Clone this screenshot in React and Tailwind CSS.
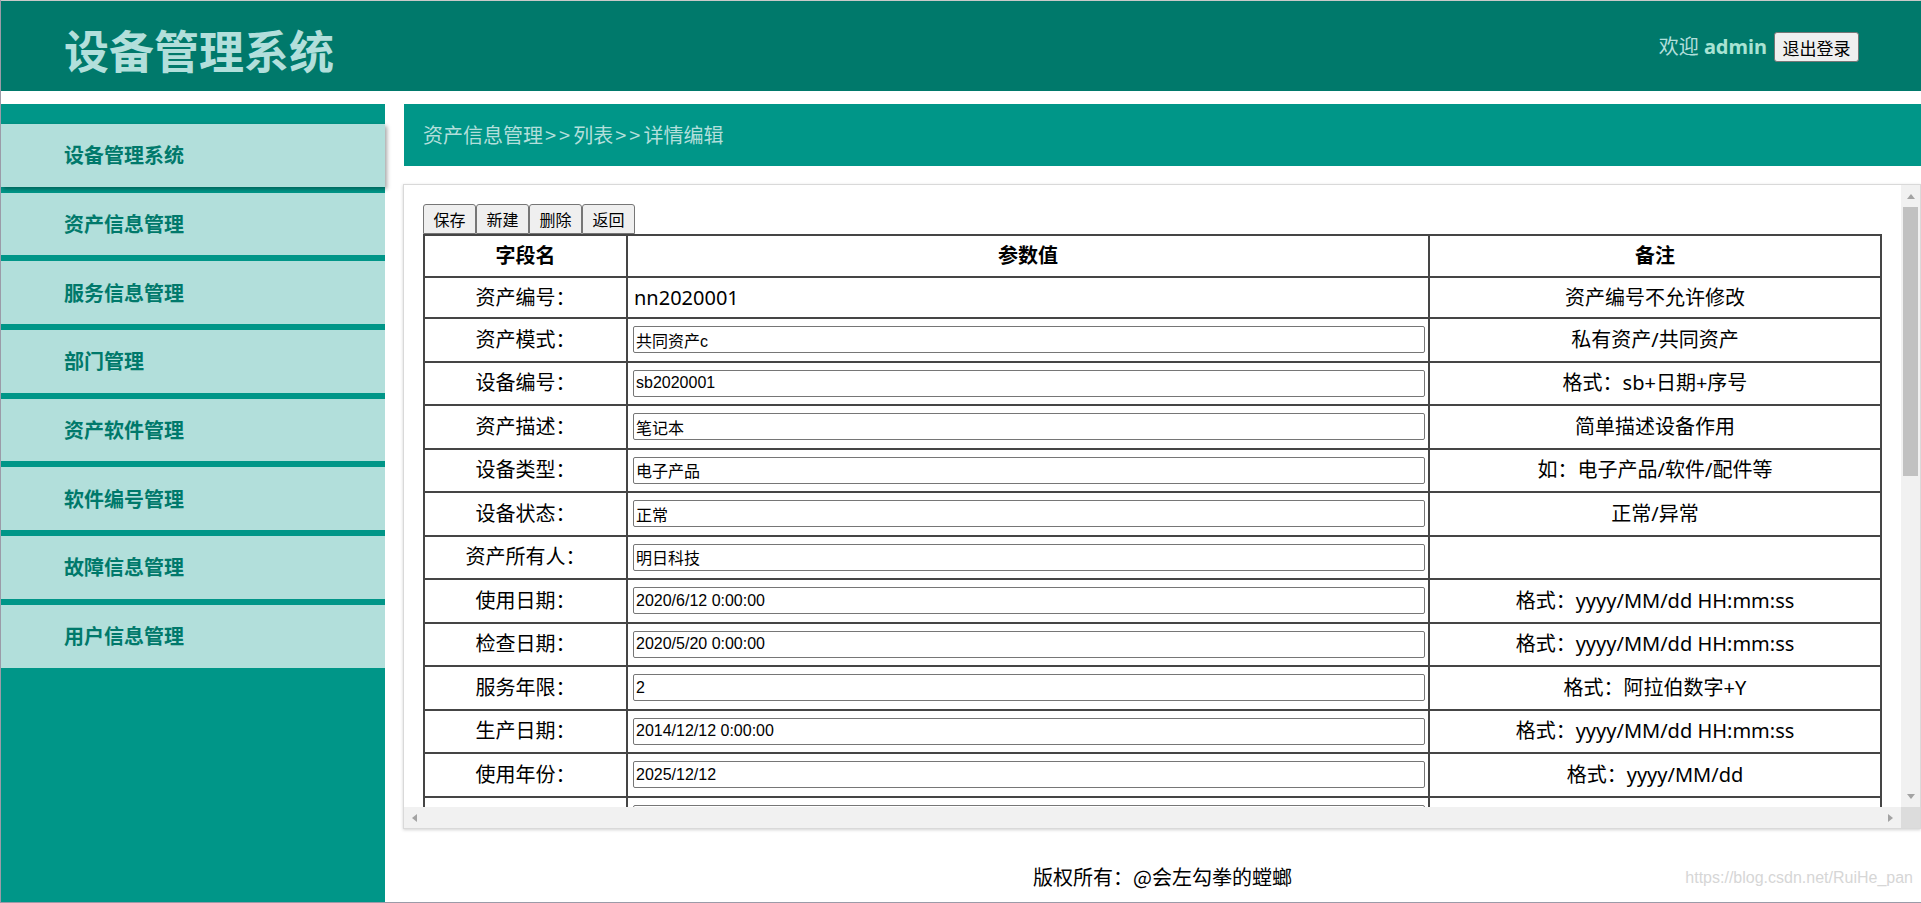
import React from "react";

const menu = [
  "设备管理系统",
  "资产信息管理",
  "服务信息管理",
  "部门管理",
  "资产软件管理",
  "软件编号管理",
  "故障信息管理",
  "用户信息管理",
];

const rows = [
  ["资产模式：", "共同资产c", "私有资产/共同资产"],
  ["设备编号：", "sb2020001", "格式：sb+日期+序号"],
  ["资产描述：", "笔记本", "简单描述设备作用"],
  ["设备类型：", "电子产品", "如：电子产品/软件/配件等"],
  ["设备状态：", "正常", "正常/异常"],
  ["资产所有人：", "明日科技", ""],
  ["使用日期：", "2020/6/12 0:00:00", "格式：yyyy/MM/dd HH:mm:ss"],
  ["检查日期：", "2020/5/20 0:00:00", "格式：yyyy/MM/dd HH:mm:ss"],
  ["服务年限：", "2", "格式：阿拉伯数字+Y"],
  ["生产日期：", "2014/12/12 0:00:00", "格式：yyyy/MM/dd HH:mm:ss"],
  ["使用年份：", "2025/12/12", "格式：yyyy/MM/dd"],
  ["", "", ""],
];

function Tri({ dir }) {
  const pts = {
    up: "0,5 4,0 8,5",
    down: "0,0 8,0 4,5",
    left: "5,0 5,8 0,4",
    right: "0,0 0,8 5,4",
  }[dir];
  const v = dir === "up" || dir === "down";
  return (
    <svg width={v ? 8 : 5} height={v ? 5 : 8} viewBox={v ? "0 0 8 5" : "0 0 5 8"}>
      <polygon points={pts} fill="#a3a3a3" />
    </svg>
  );
}

export default function App() {
  return (
    <div className="relative w-[1921px] h-[903px] overflow-hidden flex flex-col bg-white border-l border-b border-[#9b9ba8] font-['Noto_Sans','Noto_Sans_CJK_SC',sans-serif] text-black">
      <header className="h-[91px] shrink-0 bg-[#00796b] border-t border-[#c9c9c9] flex items-center justify-between pl-[63px] pr-[62px]">
        <h1 className="pt-[6px] text-[45px] font-bold leading-none text-[#b2dfdb] font-['Noto_Sans_CJK_SC',sans-serif]">
          设备管理系统
        </h1>
        <div className="flex items-center gap-[7px] pt-[2px]">
          <span className="text-[20px] leading-none text-[#b2dfdb]">
            欢迎 <b className="text-[#a8e3d3]">admin</b>
          </span>
          <button className="h-[30px] w-[85px] bg-[#efefef] border border-[#767676] rounded-[3px] text-[17px] leading-none text-black font-['Noto_Sans_CJK_SC',sans-serif]">
            退出登录
          </button>
        </div>
      </header>

      <div className="flex flex-1 min-h-0 pt-[13px]">
        <nav className="w-[384px] shrink-0 bg-[#009688] pt-[20px] flex flex-col gap-[6px]">
          {menu.map((m, i) => (
            <div
              key={m}
              className={
                i === 0
                  ? "h-[62.7px] bg-[#b2dfdb] flex items-center pl-[63px] text-[20px] font-bold text-[#00796b] font-['Noto_Sans_CJK_SC',sans-serif] shadow-[2px_2px_4px_rgba(0,0,0,0.35)]"
                  : "h-[62.7px] bg-[#b2dfdb] flex items-center pl-[63px] text-[20px] font-bold text-[#00796b] font-['Noto_Sans_CJK_SC',sans-serif]"
              }
            >
              {m}
            </div>
          ))}
        </nav>

        <main className="flex-1 min-w-0 ml-[19px] flex flex-col">
          <div className="h-[62px] shrink-0 bg-[#009688] flex items-center pl-[19px] text-[20px] text-[#b2dfdb] font-['Noto_Sans_CJK_SC',sans-serif]">
            资产信息管理<span className="tracking-[3px] pl-[2px]">&gt;&gt;</span>列表
            <span className="tracking-[3px] pl-[2px]">&gt;&gt;</span>详情编辑
          </div>

          <div className="mt-[18px] -ml-px h-[645px] shrink-0 border border-[#d9d9d9] shadow-[0_1px_3px_rgba(0,0,0,0.18)] flex flex-col">
            <div className="flex flex-1 min-h-0">
              <div className="flex-1 min-w-0 overflow-hidden pt-[19px] pl-[19px]">
                <div className="flex">
                  {["保存", "新建", "删除", "返回"].map((b) => (
                    <button
                      key={b}
                      className="h-[30px] w-[53px] bg-[#efefef] border border-[#767676] rounded-t-[3px] text-[16px] leading-none text-black font-['Noto_Sans_CJK_SC',sans-serif]"
                    >
                      {b}
                    </button>
                  ))}
                </div>
                <table className="table-fixed border-collapse w-[1457px] text-[20px]">
                  <colgroup>
                    <col className="w-[203px]" />
                    <col className="w-[802px]" />
                    <col className="w-[452px]" />
                  </colgroup>
                  <thead>
                    <tr className="h-[42px]">
                      <th className="border-2 border-[#454545] font-bold">字段名</th>
                      <th className="border-2 border-[#454545] font-bold">参数值</th>
                      <th className="border-2 border-[#454545] font-bold">备注</th>
                    </tr>
                  </thead>
                  <tbody>
                    <tr className="h-[41px]">
                      <td className="border-2 border-[#454545] text-center">资产编号：</td>
                      <td className="border-2 border-[#454545] text-left pl-[6px]">nn2020001</td>
                      <td className="border-2 border-[#454545] text-center">资产编号不允许修改</td>
                    </tr>
                    {rows.map(([l, v, n], i) => (
                      <tr key={i} className="h-[43.5px]">
                        <td className="border-2 border-[#454545] text-center">{l}</td>
                        <td className="border-2 border-[#454545] pl-[5px]">
                          <input
                            readOnly
                            defaultValue={v}
                            className="block w-[792px] h-[27px] bg-white border border-[#767676] rounded-[2px] px-[2px] text-[16px] text-black font-['Liberation_Sans','Noto_Sans_CJK_SC',sans-serif] outline-none"
                          />
                        </td>
                        <td className="border-2 border-[#454545] text-center">{n}</td>
                      </tr>
                    ))}
                  </tbody>
                </table>
              </div>
              <div className="w-[19px] shrink-0 bg-[#f1f1f1] flex flex-col">
                <div className="h-[22px] flex items-center justify-center">
                  <Tri dir="up" />
                </div>
                <div className="mx-[2px] h-[269px] bg-[#c1c1c1]" />
                <div className="flex-1" />
                <div className="h-[22px] flex items-center justify-center">
                  <Tri dir="down" />
                </div>
              </div>
            </div>
            <div className="h-[21px] shrink-0 flex">
              <div className="flex-1 bg-[#f1f1f1] flex items-center justify-between px-[8px]">
                <Tri dir="left" />
                <Tri dir="right" />
              </div>
              <div className="w-[19px] bg-[#dcdcdc]" />
            </div>
          </div>

          <footer className="flex-1 flex justify-center pt-[37px] text-[20px] leading-[22px] font-['Noto_Sans_CJK_SC',sans-serif]">
            版权所有：@会左勾拳的螳螂
          </footer>
        </main>
      </div>

      <div className="absolute right-[8px] bottom-[12px] text-[16px] text-[#d6d6d6] font-['Liberation_Sans',sans-serif]">
        https://blog.csdn.net/RuiHe_pan
      </div>
    </div>
  );
}
